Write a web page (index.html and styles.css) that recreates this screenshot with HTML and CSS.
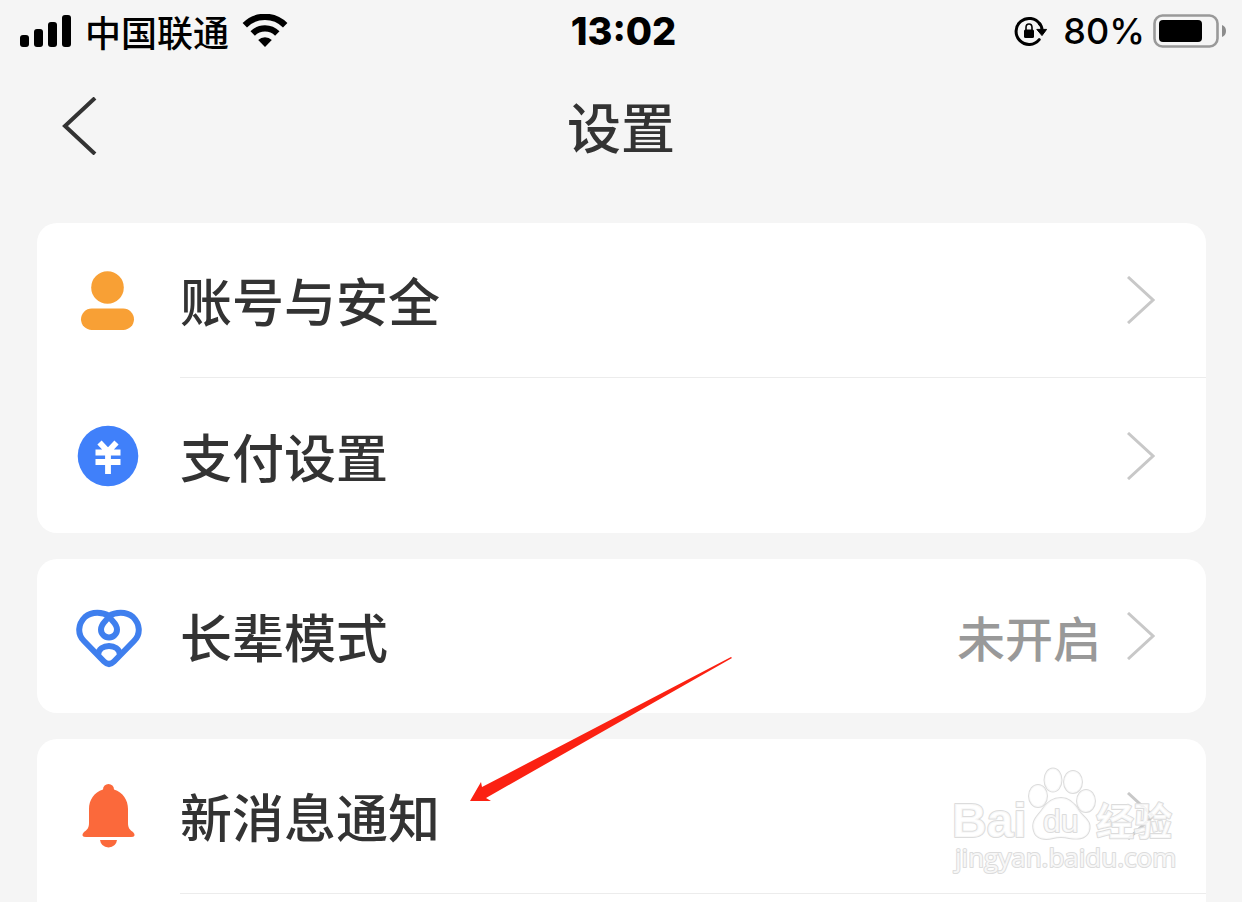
FILE: index.html
```
<!DOCTYPE html>
<html lang="zh-CN">
<head>
<meta charset="utf-8">
<meta name="viewport" content="width=device-width, initial-scale=1">
<title>设置</title>
<link rel="stylesheet" href="styles.css">
</head>
<body>
<div class="status-bar">
  <div class="status-left">
    <svg class="signal" width="52" height="34" viewBox="0 0 52 34" aria-hidden="true">
      <rect x="0" y="21" width="9" height="12" rx="3"/>
      <rect x="14" y="15" width="9" height="18" rx="3"/>
      <rect x="28" y="8" width="9" height="25" rx="3"/>
      <rect x="42" y="1" width="9" height="32" rx="3"/>
    </svg>
    <span class="carrier">中国联通</span>
    <svg class="wifi" width="46" height="34" viewBox="0 0 46 34" aria-hidden="true">
      <path d="M2.8 11.2A28.5 28.5 0 0 1 43.2 11.2" fill="none" stroke="#000" stroke-width="6.2"/>
      <path d="M10.7 19.5A17.3 17.3 0 0 1 35.3 19.5" fill="none" stroke="#000" stroke-width="6.2"/>
      <path d="M16.2 26A9.5 9.5 0 0 1 29.8 26L23 33Z"/>
    </svg>
  </div>
  <time class="clock">13:02</time>
  <div class="status-right">
    <svg class="rotation" width="34" height="32" viewBox="0 0 34 32" aria-hidden="true">
      <path d="M25.9 9.2A13 13 0 1 0 25.2 24.6" fill="none" stroke="#000" stroke-width="3" stroke-linecap="round"/>
      <path d="M22.8 14.4H32.6L28 20.6Z" stroke="#000" stroke-linejoin="round"/>
      <path d="M25 8Q28 11 28 15" fill="none" stroke="#000" stroke-width="3"/>
      <rect x="10" y="14.5" width="10" height="8.5" rx="1.5"/>
      <path d="M12 15V12.5A3 3.5 0 0 1 18 12.5V15" fill="none" stroke="#000" stroke-width="1.6"/>
    </svg>
    <span class="percent">80%</span>
    <svg class="battery" width="74" height="34" viewBox="0 0 74 34" aria-hidden="true">
      <rect x="1.5" y="1.5" width="63" height="31" rx="8" fill="none" stroke="#999" stroke-width="2.6"/>
      <rect x="6" y="6" width="43" height="22" rx="4"/>
      <path d="M69 11Q73 12.5 73 17T69 23Z" fill="#8c8c8c"/>
    </svg>
  </div>
</div>

<header class="title-bar">
  <button class="back" type="button" aria-label="返回">
    <svg width="36" height="58" viewBox="0 0 36 58" aria-hidden="true"><path d="M33 1L3 29L33 57" fill="none" stroke="#333" stroke-width="4"/></svg>
  </button>
  <h1 class="title">设置</h1>
</header>

<main class="settings">
  <section class="card">
    <a class="row" href="#account">
      <svg class="icon" width="68" height="68" viewBox="0 0 68 68" aria-hidden="true">
        <g fill="#f8a035"><circle cx="33.5" cy="21.5" r="16.3"/><rect x="7" y="42.5" width="53" height="21.5" rx="10.7"/></g>
      </svg>
      <span class="row-body"><span class="label">账号与安全</span><svg class="chevron" width="28" height="48" viewBox="0 0 28 48" aria-hidden="true"><path d="M1 1L26 24L1 47"/></svg></span>
    </a>
    <a class="row" href="#payment">
      <svg class="icon" width="68" height="68" viewBox="0 0 68 68" aria-hidden="true">
        <circle cx="34" cy="35" r="30.3" fill="#4080fa"/>
        <path d="M25.5 21.5L34 30.5L42.5 21.5M21.5 31.5H46.500M21.5 41H46.500M34 30V53" fill="none" stroke="#fff" stroke-width="5.800"/>
      </svg>
      <span class="row-body"><span class="label">支付设置</span><svg class="chevron" width="28" height="48" viewBox="0 0 28 48" aria-hidden="true"><path d="M1 1L26 24L1 47"/></svg></span>
    </a>
  </section>

  <section class="card">
    <a class="row" href="#elder">
      <svg class="icon" width="68" height="68" viewBox="0 0 68 68" aria-hidden="true">
        <g fill="none" stroke="#3f7fee" stroke-width="6" stroke-linejoin="round">
          <path d="M35 14C29 10 18 9 11 15C4 22 3 32 10 39L30 59.500Q35 64.500 40 59.500L60 39C67 32 66 22 59 15C52 9 41 10 35 14Z"/>
          <path d="M35 14C33 19 27 21 27 27.500A8 8 0 0 0 43 27.500C43 21 37 19 35 14Z"/>
          <path d="M24 53C25 41 45 41 46 53"/>
        </g>
      </svg>
      <span class="row-body"><span class="label">长辈模式</span><span class="value">未开启</span><svg class="chevron" width="28" height="48" viewBox="0 0 28 48" aria-hidden="true"><path d="M1 1L26 24L1 47"/></svg></span>
    </a>
  </section>

  <section class="card card-last">
    <a class="row" href="#notifications">
      <svg class="icon" width="68" height="68" viewBox="0 0 68 68" aria-hidden="true">
        <g fill="#fb693b"><path d="M29 7.500A5.500 5.500 0 0 1 40 7.500C49 10.500 54 18 54 27V41C54 46 56 48 59 50Q61 52 60.500 53.500T57 55H12Q9 55 8.500 53.500T10 50C13 48 15 46 15 41V27C15 18 20 10.500 29 7.500Z"/><path d="M26 58H43Q42 65 34.500 65.500Q27 65 26 58Z"/></g>
      </svg>
      <span class="row-body"><span class="label">新消息通知</span><svg class="chevron" width="28" height="48" viewBox="0 0 28 48" aria-hidden="true"><path d="M1 1L26 24L1 47"/></svg></span>
    </a>
    <div class="row-rest"></div>
    <svg class="watermark" width="228" height="112" viewBox="0 0 228 112" role="img" aria-label="Baidu 经验 jingyan.baidu.com">
      <text class="mark brand" x="0" y="72">Bai</text>
      <g class="mark">
        <ellipse cx="86" cy="31" rx="9" ry="11"/>
        <ellipse cx="101" cy="15" rx="8.5" ry="11.5"/>
        <ellipse cx="121" cy="17" rx="9" ry="11"/>
        <ellipse cx="134" cy="36" rx="9" ry="11"/>
        <path d="M90 45C95 37 101 33 109 33S123 39 127 46C132 53 140 56 137 66C134 75 124 74 117 73Q109 71 101 73C93 75 84 74 82 66C79 56 85 52 90 45Z"/>
      </g>
      <text class="mark paw-text" x="91" y="67">du</text>
      <text class="mark experience" x="144" y="70">经验</text>
      <text class="mark site" x="3" y="102">jingyan.baidu.com</text>
    </svg>
  </section>

  <svg class="pointer" width="264" height="146" viewBox="0 0 264 146" aria-hidden="true"><path d="M0 144L11 125L12 130L261 0L262 1L16 141L21 144Z" fill="#fb2112"/></svg>
</main>
</body>
</html>
```
FILE: styles.css
```
* { box-sizing: border-box; }
body {
  margin: 0;
  background: #f5f5f5;
  color: #333;
  font-family: "Noto Sans CJK SC", sans-serif;
}
svg { display: block; flex: none; }
.status-bar {
  display: grid;
  grid-template-columns: 1fr auto 1fr;
  align-items: center;
  height: 62px;
  padding: 0 15px 0 20px;
  color: #000;
  font-size: 36px;
  line-height: 44px;
}
.status-left, .status-right { display: flex; align-items: center; }
.status-left { gap: 13px; }
.status-right { justify-content: flex-end; }
.carrier { font-weight: 500; }
.clock { font-family: Inter, sans-serif; font-size: 38px; font-weight: 800; }
.percent { margin: 0 8px 0 15px; font-family: Inter, sans-serif; font-weight: 500; }
.title-bar {
  display: grid;
  grid-template-columns: 1fr auto 1fr;
  align-items: center;
  height: 128px;
  padding: 0 62px;
}
.back { justify-self: start; padding: 0; border: 0; background: none; }
.title { margin: 0; font-size: 54px; line-height: 64px; font-weight: 500; }
.settings {
  position: relative;
  display: flex;
  flex-direction: column;
  gap: 26px;
  padding: 33px 36px 0 37px;
}
.card { position: relative; border-radius: 20px; background: #fff; }
.card-last { border-radius: 20px 20px 0 0; }
.row {
  display: flex;
  align-items: center;
  gap: 38px;
  padding-left: 37px;
  color: #333;
  text-decoration: none;
}
.row-body {
  flex: 1;
  display: flex;
  align-items: center;
  gap: 26px;
  min-height: 154px;
  padding-right: 51px;
}
.row + .row .row-body { min-height: 156px; border-top: 1px solid #ececec; }
.label { flex: 1; font-size: 52px; line-height: 64px; font-weight: 500; }
.value { color: #999; font-size: 48px; line-height: 64px; font-weight: 500; }
.chevron { fill: none; stroke: #c8c8c8; stroke-width: 3px; }
.row-rest { height: 9px; margin-left: 143px; border-top: 1px solid #ececec; }
.watermark { position: absolute; right: 26px; top: 26px; }
.pointer { position: absolute; left: 470px; top: 467px; }
.mark { fill: #fff; fill-opacity: 0.8; stroke: #dcdcdc; stroke-width: 2px; stroke-linejoin: round; paint-order: stroke; }
.brand { font: 700 48px "Liberation Sans", sans-serif; }
.paw-text { font: 400 32px "Liberation Sans", sans-serif; }
.experience { font: 700 38px "Noto Sans CJK SC", sans-serif; }
.site { font: 400 26px "Open Sans", sans-serif; }
```
